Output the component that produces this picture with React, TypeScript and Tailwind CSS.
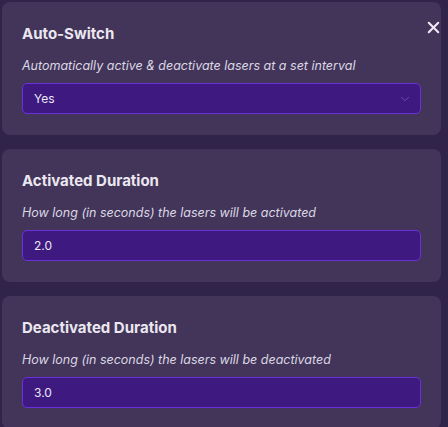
import { ChevronDown, X } from 'lucide-react';

interface Field {
  title: string;
  hint: string;
  value: string;
  select?: boolean;
}

const fields: Field[] = [
  { title: 'Auto-Switch', hint: 'Automatically active & deactivate lasers at a set interval', value: 'Yes', select: true },
  { title: 'Activated Duration', hint: 'How long (in seconds) the lasers will be activated', value: '2.0' },
  { title: 'Deactivated Duration', hint: 'How long (in seconds) the lasers will be deactivated', value: '3.0' },
];

export default function App() {
  return (
    <div
      className="relative h-[427px] w-[448px] overflow-hidden bg-[#30244a] pl-[2px] pr-[7px] pt-[2px]"
      style={{ fontFamily: 'Inter, "Noto Sans", sans-serif' }}
    >
      <div className="flex flex-col gap-[14px]">
        {fields.map((f) => (
          <div key={f.title} className="h-[133px] shrink-0 rounded-[8px] bg-[#423559] px-[20px] pt-[22px]">
            <h3 className="text-[15px] font-bold leading-[20px] text-[#ebe7f0]">{f.title}</h3>
            <p className="mt-[14px] text-[12.5px] italic leading-[16px] text-[#dcd7e4]">{f.hint}</p>
            <div className="mt-[9px] flex h-[31px] items-center justify-between rounded-[5px] border border-[#6a31d9] bg-[#3e1a80] pl-[11px] pr-[8px]">
              <span className="text-[12px] text-[#ece8f4]">{f.value}</span>
              {f.select && <ChevronDown className="h-[14px] w-[14px] text-[#7555b8]" strokeWidth={1.5} />}
            </div>
          </div>
        ))}
      </div>
      <X className="absolute right-[5px] top-[18px] h-[19px] w-[19px] text-[#efeaf5]" strokeWidth={2.6} />
    </div>
  );
}
